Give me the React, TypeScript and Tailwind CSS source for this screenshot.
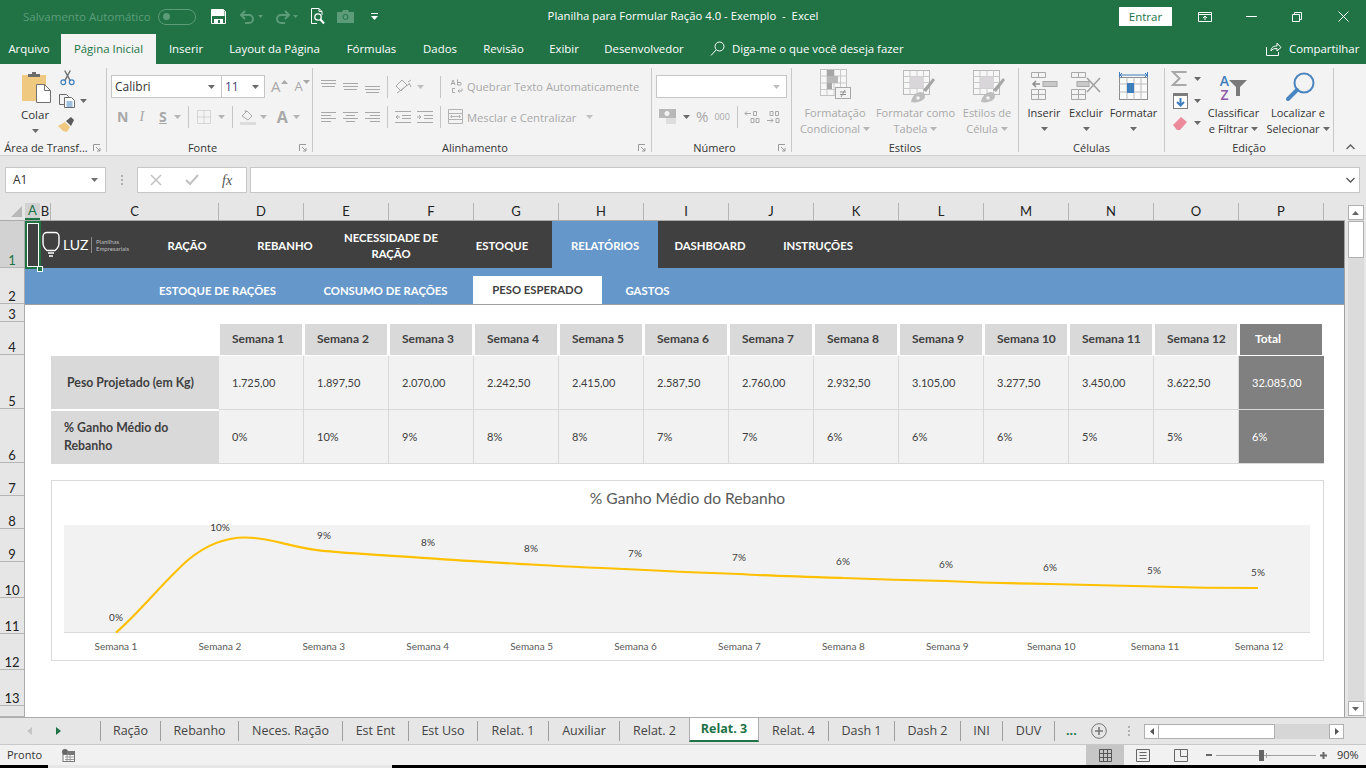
import type { ReactNode } from "react";

const UI = "font-['Open_Sans','Noto_Sans',sans-serif]";
const CELL = "font-['Lato','Liberation_Sans',sans-serif]";

const COLS = ["D", "E", "F", "G", "H", "I", "J", "K", "L", "M", "N", "O", "P"];
const WEEKS = Array.from({ length: 12 }, (_, i) => `Semana ${i + 1}`);
const PESO = ["1.725,00", "1.897,50", "2.070,00", "2.242,50", "2.415,00", "2.587,50", "2.760,00", "2.932,50", "3.105,00", "3.277,50", "3.450,00", "3.622,50"];
const GANHO = ["0%", "10%", "9%", "8%", "8%", "7%", "7%", "6%", "6%", "6%", "5%", "5%"];
const LABEL_POS: [number, number][] = [[116, 621], [220, 531], [324, 539], [428, 546], [531, 552], [635, 557], [739, 561], [843, 565], [946, 568], [1050, 571], [1154, 574], [1258, 576]];
const ROWS: [string, number][] = [["1", 47], ["2", 36], ["3", 18], ["4", 33], ["5", 54], ["6", 54], ["7", 33], ["8", 33], ["9", 33], ["10", 36], ["11", 36], ["12", 36], ["13", 36], ["", 11]];
const TOP_TABS: [string, number][] = [["Inserir", 60], ["Layout da Página", 117], ["Fórmulas", 77], ["Dados", 60], ["Revisão", 67], ["Exibir", 54], ["Desenvolvedor", 106]];
const SHEETS: [string, number][] = [["Ração", 60], ["Rebanho", 78], ["Neces. Ração", 104], ["Est Ent", 66], ["Est Uso", 69], ["Relat. 1", 71], ["Auxiliar", 71], ["Relat. 2", 70], ["Relat. 3", 70], ["Relat. 4", 70], ["Dash 1", 66], ["Dash 2", 66], ["INI", 42], ["DUV", 52]];

function Caret({ color = "#6a6a6a", className = "" }: { color?: string; className?: string }) {
  return (
    <svg width="7" height="4" viewBox="0 0 7 4" className={className}>
      <path d="M0 0h7L3.5 4z" fill={color} />
    </svg>
  );
}

function Sep({ className = "" }: { className?: string }) {
  return <div className={`w-px h-[22px] bg-[#c6c6c6] ${className}`} />;
}

function Launcher() {
  return (
    <svg width="8" height="8" viewBox="0 0 8 8" className="absolute right-[5px] top-[4px]">
      <path d="M.5 7V.5H7M3 3l4 4M7 4v3H4" fill="none" stroke="#9a9a9a" />
    </svg>
  );
}

function Group({ width, label, children, launcher }: { width: number; label: string; children: ReactNode; launcher?: boolean }) {
  return (
    <div style={{ width }} className="h-[84px] shrink-0 border-r border-[#c8c8c8]">
      <div className="h-[72px] flex">{children}</div>
      <div className={`relative h-[16px] flex items-center justify-center text-[11px] text-[#333] ${launcher ? "pr-[14px]" : ""}`}>
        {label}
        {launcher && <Launcher />}
      </div>
    </div>
  );
}

function BigButton({ width, icon, lines, disabled, caretLine }: { width: number; icon: ReactNode; lines: string[]; disabled?: boolean; caretLine?: boolean }) {
  return (
    <div style={{ width }} className={`shrink-0 flex flex-col items-center leading-[16px] text-[11px] ${disabled ? "text-[#a9a9a9]" : "text-[#333]"}`}>
      <div className="h-[37px] flex items-center justify-center">{icon}</div>
      {lines.map((l, i) => (
        <div key={l} className="h-[16px] whitespace-nowrap flex items-center gap-[3px]">
          {l}
          {caretLine && i === lines.length - 1 && <Caret color={disabled ? "#b5b5b5" : "#6a6a6a"} />}
        </div>
      ))}
      {!caretLine && (
        <div className="h-[16px] flex items-center">
          <Caret />
        </div>
      )}
    </div>
  );
}

function AlignIcon({ rows }: { rows: [number, number][] }) {
  return (
    <svg width="15" height="12" viewBox="0 0 15 12" className="shrink-0">
      {rows.map(([x, w], i) => (
        <rect key={i} x={x} y={i * 3 + 1} width={w} height="1" fill="#a8a8a8" />
      ))}
    </svg>
  );
}

function VAlign({ pad }: { pad: number }) {
  return (
    <svg width="15" height="16" viewBox="0 0 15 16" className="shrink-0">
      <rect y={pad} width="15" height="1" fill="#a8a8a8" />
      <rect y={pad + 3} width="15" height="1" fill="#a8a8a8" />
      <rect x="1" y={pad + 6} width="13" height="1" fill="#a8a8a8" />
    </svg>
  );
}

function TableIcon({ className = "" }: { className?: string }) {
  return (
    <svg width="32" height="33" viewBox="0 0 32 33" className={className}>
      <rect x=".5" y=".5" width="26" height="24" fill="#f7f7f7" stroke="#b9b9b9" />
      <path d="M.5 6.500h26M.5 12.500h26M.5 18.500h26M7 .5v24M14 .5v24M20.500 .5v24" stroke="#c9c9c9" fill="none" />
      <rect x="7" y="6.500" width="14" height="12" fill="#d9d6d9" />
      <path d="M30 8l2 2-9 12-3-2z" fill="#a6a6a6" />
      <path d="M8 32c1-6 5-10 10-10 4 1 5 4 3 7-3 3-9 4-13 3z" fill="#bdbdbd" />
      <circle cx="15" cy="28" r="1.800" fill="#f3f3f3" />
    </svg>
  );
}

function TitleBar() {
  return (
    <div className="h-[33px] shrink-0 flex items-center bg-[#217346] text-white">
      <span className="ml-[23px] w-[129px] text-[11.5px] whitespace-nowrap text-[#5c9c79]">Salvamento Automático</span>
      <div className="ml-[6px] w-[38px] h-[16px] rounded-full border border-[#5c9c79] flex items-center pl-[4px]">
        <div className="w-[7px] h-[7px] rounded-full bg-[#5c9c79]" />
      </div>
      <svg width="15" height="15" viewBox="0 0 15 15" className="ml-[15px]">
        <path d="M.5.5h12l2 2v12H.5z" fill="none" stroke="#fff" />
        <rect x="1" y="1" width="12.500" height="6" fill="#fff" />
        <rect x="3" y="10" width="9" height="5" fill="#fff" />
        <rect x="7" y="11" width="2" height="3" fill="#217346" />
      </svg>
      <svg width="24" height="14" viewBox="0 0 24 14" className="ml-[14px]" fill="none" stroke="#5c9c79" strokeWidth="2">
        <path d="M1 5h8a4 4 0 010 8H5M5 1L1 5l4 4" />
        <path d="M18 5h5l-2.500 3z" fill="#5c9c79" stroke="none" />
      </svg>
      <svg width="24" height="14" viewBox="0 0 24 14" className="ml-[11px]" fill="none" stroke="#5c9c79" strokeWidth="2">
        <path d="M14 5H6a4 4 0 000 8h4M10 1l4 4-4 4" />
        <path d="M18 5h5l-2.500 3z" fill="#5c9c79" stroke="none" />
      </svg>
      <svg width="15" height="17" viewBox="0 0 15 17" className="ml-[11px]" fill="none" stroke="#fff">
        <path d="M9 .5H1.500v15H7M9 .5l3 3V7M9 .5v3h3" />
        <circle cx="8" cy="9" r="3.200" strokeWidth="1.300" />
        <path d="M10.500 11.500l3.500 4" strokeWidth="2" />
      </svg>
      <svg width="17" height="13" viewBox="0 0 17 13" className="ml-[12px]">
        <path d="M0 2h5l1-2h5l1 2h5v11H0z" fill="#5c9c79" />
        <circle cx="8.500" cy="7" r="2.500" fill="none" stroke="#217346" />
      </svg>
      <svg width="7" height="7" viewBox="0 0 7 7" className="ml-[17px]">
        <rect width="7" height="1" fill="#fff" />
        <path d="M0 3h7L3.500 7z" fill="#fff" />
      </svg>
      <span className="ml-[169px] w-[272px] text-[11.3px] whitespace-pre text-center">Planilha para Formular Ração 4.0 - Exemplo  -  Excel</span>
      <div className="ml-[300px] w-[53px] h-[19px] bg-white text-[#217346] text-[11.5px] flex items-center justify-center">Entrar</div>
      <svg width="14" height="10" viewBox="0 0 14 10" className="ml-[26px]" fill="none" stroke="#fff">
        <path d="M.5.5h13v9H.5zM.5 2.500h13M7 8V4M5 6l2-2 2 2" />
      </svg>
      <div className="ml-[34px] w-[11px] h-px bg-white" />
      <svg width="10" height="10" viewBox="0 0 10 10" className="ml-[35px]" fill="none" stroke="#fff">
        <path d="M.5 2.500h7v7h-7zM2.500 2.500v-2h7v7h-2" />
      </svg>
      <svg width="11" height="11" viewBox="0 0 11 11" className="ml-[36px]" stroke="#fff">
        <path d="M.5.5l10 10M10.500.5l-10 10" />
      </svg>
    </div>
  );
}

function MenuTabs() {
  return (
    <div className="h-[31px] shrink-0 flex items-end bg-[#217346] text-white text-[11.4px]">
      <div className="w-[58px] mr-[3px] h-[30px] flex items-center justify-center">Arquivo</div>
      <div className="w-[95px] h-[30px] bg-[#f3f3f3] text-[#217346] flex items-center justify-center">Página Inicial</div>
      {TOP_TABS.map(([t, w]) => (
        <div key={t} style={{ width: w }} className="h-[30px] flex items-center justify-center whitespace-nowrap">{t}</div>
      ))}
      <svg width="15" height="15" viewBox="0 0 15 15" className="ml-[13px] mb-[8px]" fill="none" stroke="#fff">
        <circle cx="9.500" cy="5.500" r="4.500" />
        <path d="M6 9l-5 5.500" />
      </svg>
      <div className="ml-[7px] w-[171px] h-[30px] flex items-center whitespace-nowrap">Diga-me o que você deseja fazer</div>
      <svg width="16" height="14" viewBox="0 0 16 14" className="ml-[363px] mb-[8px]" fill="none" stroke="#fff">
        <path d="M.5 5v8.500h12V10M5 9c0-4 3-5 6-5V1l4 4.500L11 9V6.500C8 6.500 6 7 5 9z" />
      </svg>
      <div className="ml-[7px] h-[30px] flex items-center whitespace-nowrap">Compartilhar</div>
    </div>
  );
}

function Ribbon() {
  return (
    <div className={`h-[92px] shrink-0 bg-[#f3f3f3] border-b border-[#d2d2d2] pt-[4px] flex ${UI}`}>
      <Group width={107} label="Área de Transf..." launcher>
        <div className="w-[70px] flex flex-col items-center leading-[16px] text-[11.500px] text-[#333]">
          <svg width="29" height="31" viewBox="0 0 29 31" className="mt-[4px] mb-[2px] ml-[2px]">
            <rect y="3" width="24" height="26" fill="#efc97f" />
            <path d="M6 5V2h4V0h4v2h4v3z" fill="#6d6d6d" />
            <path d="M14.500 12.500h8l6 6v12h-14z" fill="#fff" stroke="#707070" />
            <path d="M22.500 12.500v6h6" fill="none" stroke="#707070" />
          </svg>
          <div className="h-[16px] mt-[2px]">Colar</div>
          <div className="h-[16px] flex items-center"><Caret /></div>
        </div>
        <div className="flex flex-col">
          <svg width="15" height="16" viewBox="0 0 16 16" className="mt-[2px] ml-[-10px]" fill="none">
            <path d="M5 0l6 11M11 0L5 11" stroke="#6f6f6f" strokeWidth="1.500" />
            <circle cx="3.500" cy="12.500" r="2.500" stroke="#3f7ebd" strokeWidth="1.300" />
            <circle cx="12.500" cy="12.500" r="2.500" stroke="#3f7ebd" strokeWidth="1.300" />
          </svg>
          <div className="mt-[8px] ml-[-11px] flex items-center gap-[5px]">
            <svg width="16" height="14" viewBox="0 0 16 14" fill="none" stroke="#6a6a6a">
              <path d="M.5.5h7l2 2v8h-9z" fill="#f3f3f3" />
              <path d="M5.500 3.500h7l3 3v7h-10z" fill="#fff" />
              <path d="M7.500 8h6M7.500 10h6M7.500 12h6" stroke="#3f7ebd" />
            </svg>
            <Caret />
          </div>
          <svg width="16" height="15" viewBox="0 0 16 15" className="mt-[9px] ml-[-12px]">
            <path d="M0 9l7-4 5 5-3 5-4-1z" fill="#efc97f" />
            <path d="M8 4l5-4 3 3-3 6z" fill="#5a5a5a" />
          </svg>
        </div>
      </Group>
      <Group width={206} label="Fonte" launcher>
        <div className="pl-[4px] pt-[7px] flex flex-col gap-[7px]">
          <div className="flex items-center h-[23px]">
            <div className="w-[111px] h-[23px] bg-white border border-[#c6c6c6] flex items-center justify-between px-[3px] pr-[6px] text-[#333] text-[12px]">
              Calibri
              <Caret />
            </div>
            <div className="w-[43px] h-[23px] bg-white border border-[#c6c6c6] border-l-0 flex items-center justify-between pl-[3px] pr-[5px] text-[#4a3c78] text-[12px]">
              11
              <Caret />
            </div>
            <span className="ml-[6px] text-[15px] text-[#a8a8a8] leading-none">A</span>
            <Caret color="#a8a8a8" className="rotate-180 mb-[10px]" />
            <span className="ml-[7px] text-[13px] text-[#a8a8a8] leading-none">A</span>
            <Caret color="#a8a8a8" className="mb-[10px]" />
          </div>
          <div className="flex items-center h-[23px] text-[#a8a8a8] text-[14px] leading-none">
            <span className="ml-[6px] font-bold">N</span>
            <span className="ml-[11px] italic font-['Liberation_Serif',serif]">I</span>
            <span className="ml-[15px] font-bold underline">S</span>
            <Caret color="#b5b5b5" className="ml-[7px]" />
            <Sep className="ml-[7px]" />
            <svg width="14" height="14" viewBox="0 0 14 14" className="ml-[8px]" fill="none" stroke="#b8b8b8" strokeDasharray="1 1">
              <path d="M.5.5h13v13H.5zM7 .5v13M.5 7h13" />
            </svg>
            <Caret color="#b5b5b5" className="ml-[7px]" />
            <Sep className="ml-[7px]" />
            <svg width="16" height="16" viewBox="0 0 16 16" className="ml-[7px]">
              <path d="M2 7l5-5 5 5-4 4z" fill="none" stroke="#a8a8a8" />
              <path d="M5 3l1-2" stroke="#a8a8a8" />
              <rect y="13" width="16" height="3" fill="#dcdcdc" />
            </svg>
            <Caret color="#b5b5b5" className="ml-[4px]" />
            <span className="ml-[10px] text-[16px] font-bold">A</span>
            <Caret color="#b5b5b5" className="ml-[5px]" />
          </div>
        </div>
      </Group>
      <Group width={339} label="Alinhamento" launcher>
        <div className="pl-[8px] pt-[7px] flex flex-col gap-[7px] text-[#a9a9a9] text-[11.2px] whitespace-nowrap">
          <div className="flex items-center h-[23px] gap-[7px]">
            <VAlign pad={1} />
            <VAlign pad={4} />
            <VAlign pad={7} />
            <Sep />
            <svg width="17" height="15" viewBox="0 0 17 15" fill="none" stroke="#a8a8a8">
              <path d="M1 7l6-6 5 5-6 6zM13 3l3-2M14 4l2 4M2 14l12-9" />
            </svg>
            <Caret color="#c0c0c0" className="ml-[-2px]" />
            <Sep className="ml-[9px]" />
            <svg width="13" height="15" viewBox="0 0 13 15" fill="none" stroke="#a8a8a8" className="ml-[2px] shrink-0">
              <path d="M1 6l2-5 2 5M1.700 4.500h2.600M7.500.5V6M7.500 3.500h2.500a1.200 1.200 0 010 2.500H7.500M5 9.500H2.500v4H5M12 9.500v2.500H8M9.500 10.500L8 12l1.500 1.500" />
            </svg>
            <span className="ml-[-3px] mt-[2px]">Quebrar Texto Automaticamente</span>
          </div>
          <div className="flex items-center h-[23px] gap-[7px]">
            <AlignIcon rows={[[0, 15], [0, 10], [0, 15], [0, 10]]} />
            <AlignIcon rows={[[0, 15], [3, 9], [0, 15], [3, 9]]} />
            <AlignIcon rows={[[0, 15], [5, 10], [0, 15], [5, 10]]} />
            <Sep />
            <svg width="16" height="12" viewBox="0 0 16 12" stroke="#a8a8a8" fill="none">
              <path d="M0 .5h16M7 4.500h9M7 7.500h9M0 11.500h16M5 6H1M3 4L1 6l2 2" />
            </svg>
            <svg width="16" height="12" viewBox="0 0 16 12" stroke="#a8a8a8" fill="none" className="ml-[-1px]">
              <path d="M0 .5h16M7 4.500h9M7 7.500h9M0 11.500h16M0 6h4M2 4l2 2-2 2" />
            </svg>
            <Sep />
            <svg width="15" height="15" viewBox="0 0 15 15" stroke="#b3b3b3" fill="none">
              <path d="M.5.500h14v14H.5zM.5 4.500h14M.5 10.500h14M3 7.500h9M4 6L2.500 7.500 4 9M11 6l1.500 1.500L11 9" />
            </svg>
            <span className="ml-[-3px] mt-[4px]">Mesclar e Centralizar</span>
            <Caret color="#c0c0c0" className="ml-[3px]" />
          </div>
        </div>
      </Group>
      <Group width={140} label="Número" launcher>
        <div className="pl-[4px] pt-[7px] flex flex-col gap-[7px]">
          <div className="w-[131px] h-[23px] bg-white border border-[#c6c6c6] flex items-center justify-end pr-[6px]">
            <Caret color="#c0c0c0" />
          </div>
          <div className="flex items-center h-[23px] text-[#a8a8a8] leading-none">
            <svg width="18" height="16" viewBox="0 0 18 16" className="ml-[3px]">
              <rect width="17" height="9" fill="#b8b8b8" />
              <circle cx="8" cy="4.500" r="2.500" fill="#f3f3f3" />
              <path d="M7 10h10M7 12h10M7 14h10" stroke="#c8c8c8" />
            </svg>
            <Caret className="ml-[6px]" />
            <span className="ml-[6px] text-[15px]">%</span>
            <span className="ml-[6px] text-[9px]">000</span>
            <Sep className="ml-[7px]" />
            <svg width="16" height="14" viewBox="0 0 16 14" fill="none" stroke="#a8a8a8" className="ml-[6px]">
              <path d="M7 3.500H1M3 1.500l-2 2 2 2M9.500 1.500h3v4h-3zM7 8.500h3v4H7zM12 8.500h3v4h-3z" />
            </svg>
            <svg width="16" height="14" viewBox="0 0 16 14" fill="none" stroke="#a8a8a8" className="ml-[6px]">
              <path d="M4 1.500h3v4H4zM9.500 1.500h3v4h-3zM1 10.500h6M5 8.500l2 2-2 2M10 8.500h3v4h-3z" />
            </svg>
          </div>
        </div>
      </Group>
      <Group width={227} label="Estilos">
        <div className="w-[6px]" />
        <BigButton
          width={74}
          disabled
          caretLine
          lines={["Formatação", "Condicional"]}
          icon={
            <svg width="31" height="36" viewBox="0 0 31 36">
              <rect x=".5" y=".5" width="26" height="26" fill="#f7f7f7" stroke="#c2c2c2" />
              <path d="M.5 7h26M.5 14h26M.5 20.500h26M7 .5v26M14 .5v26M20.500 .5v26" stroke="#c9c9c9" />
              <rect x="7" y="1" width="7" height="6" fill="#a6a6a6" />
              <rect x="7" y="7" width="11" height="7" fill="#b8b8b8" />
              <rect x="7" y="14" width="5" height="6" fill="#a6a6a6" />
              <rect x="15.500" y="18.500" width="15" height="11" fill="#f3f3f3" stroke="#a8a8a8" />
              <path d="M20 23h6M20 25.500h6M25 21l-4 7" stroke="#8f8f8f" fill="none" />
            </svg>
          }
        />
        <BigButton width={87} disabled caretLine lines={["Formatar como", "Tabela"]} icon={<TableIcon className="ml-[7px]" />} />
        <BigButton width={56} disabled caretLine lines={["Estilos de", "Célula"]} icon={<TableIcon className="ml-[4px]" />} />
      </Group>
      <Group width={146} label="Células">
        <div className="w-[1px]" />
        <BigButton
          width={50}
          lines={["Inserir"]}
          icon={
            <svg width="27" height="29" viewBox="0 0 27 29" fill="#f3f3f3" stroke="#a8a8a8">
              <path d="M.5.5h14v5H.5zM7.500.5v5M.5 17.500h14v10H.5zM.5 22.500h14M7.500 17.500v10" />
              <rect x="12" y="9.500" width="14" height="5" fill="#c9c9c9" />
              <path d="M9 12H2M5 9l-3 3 3 3" fill="none" stroke="#8a8a8a" strokeWidth="1.500" />
            </svg>
          }
        />
        <BigButton
          width={34}
          lines={["Excluir"]}
          icon={
            <svg width="31" height="29" viewBox="0 0 31 29" fill="#f3f3f3" stroke="#a8a8a8" className="ml-[1px]">
              <path d="M.5.5h14v5H.5zM7.500.5v5M.5 17.500h14v10H.5zM.5 22.500h14M7.500 17.500v10" />
              <rect x="6" y="9.500" width="12" height="5" fill="#c9c9c9" />
              <path d="M16 6l13 14M29 6L16 20" stroke="#a0a0a0" strokeWidth="1.600" />
            </svg>
          }
        />
        <BigButton
          width={61}
          lines={["Formatar"]}
          icon={
            <svg width="29" height="32" viewBox="0 0 29 32" fill="none">
              <path d="M1 4h27M3 2L1 4l2 2M26 2l2 2-2 2M.5 1v6M28.500 1v6" stroke="#3f7ebd" />
              <rect x=".5" y="6.500" width="28" height="22" fill="#fafafa" stroke="#8d8d8d" />
              <path d="M.5 13h28M.5 21h28M8 6.500v22M15 6.500v22M22 6.500v22" stroke="#bdbdbd" />
              <rect x="8" y="12" width="7" height="10" fill="#3f7ebd" />
            </svg>
          }
        />
      </Group>
      <Group width={169} label="Edição">
        <div className="w-[34px] shrink-0 pl-[6px] flex flex-col">
          <div className="flex items-center gap-[7px] mt-[2px] h-[17px] w-[40px]">
            <svg width="16" height="15" viewBox="0 0 16 15" fill="none" stroke="#a8a8a8" strokeWidth="2">
              <path d="M15.500 1H2l6.500 6.500L2 14h13.500" />
            </svg>
            <Caret />
          </div>
          <div className="flex items-center gap-[6px] mt-[6px] h-[16px] ml-[2px] w-[40px]">
            <svg width="15" height="16" viewBox="0 0 15 16">
              <rect x=".5" y=".5" width="14" height="15" fill="#fff" stroke="#7c7c7c" />
              <rect x="0" y="0" width="15" height="3" fill="#7c7c7c" />
              <path d="M7.500 5v7M4 9l3.500 3.500L11 9" fill="none" stroke="#3f7ebd" strokeWidth="2" />
            </svg>
            <Caret />
          </div>
          <div className="flex items-center gap-[6px] mt-[7px] h-[14px] ml-[2px] w-[40px]">
            <svg width="15" height="13" viewBox="0 0 15 13">
              <path d="M0 8l8-8 6 5-7 8H4z" fill="#ec8a9b" />
            </svg>
            <Caret />
          </div>
        </div>
        <BigButton
          width={69}
          caretLine
          lines={["Classificar", "e Filtrar"]}
          icon={
            <div className="flex items-end h-[31px] relative">
              <div className="flex flex-col items-center text-[14px] leading-[14px] font-semibold">
                <span className="text-[#3f7ebd]">A</span>
                <span className="text-[#8e5aa8]">Z</span>
              </div>
              <svg width="18" height="16" viewBox="0 0 18 16" className="mb-[6px]">
                <path d="M0 0h18l-7 7v9H7V7z" fill="#7a7a7a" />
              </svg>
            </div>
          }
        />
        <BigButton
          width={60}
          caretLine
          lines={["Localizar e", "Selecionar"]}
          icon={
            <svg width="29" height="29" viewBox="0 0 29 29" fill="none" stroke="#4a85c0" className="ml-[4px]">
              <circle cx="18" cy="11" r="9.500" strokeWidth="2" />
              <path d="M11 18L2 27" strokeWidth="4" strokeLinecap="round" />
            </svg>
          }
        />
      </Group>
      <div className="flex-1 flex items-end justify-center">
        <svg width="9" height="6" viewBox="0 0 9 6" className="mb-[5px]" fill="none" stroke="#666" strokeWidth="1.500">
          <path d="M.5 5l4-4 4 4" />
        </svg>
      </div>
    </div>
  );
}

function FormulaBar() {
  return (
    <div className={`h-[47px] shrink-0 bg-[#e6e6e6] flex pt-[11px] pl-[5px] ${UI}`}>
      <div className="w-[101px] h-[26px] bg-white border border-[#c6c6c6] flex items-center justify-between px-[7px] text-[12px] text-[#333]">
        A1
        <Caret color="#707070" />
      </div>
      <div className="w-[31px] h-[26px] flex flex-col items-center justify-center gap-[2px]">
        <div className="w-[2px] h-[2px] bg-[#b0b0b0]" />
        <div className="w-[2px] h-[2px] bg-[#b0b0b0]" />
        <div className="w-[2px] h-[2px] bg-[#b0b0b0]" />
      </div>
      <div className="w-[110px] h-[26px] bg-white border border-[#c6c6c6] flex items-center">
        <svg width="12" height="12" viewBox="0 0 12 12" className="ml-[12px]" stroke="#c2c2c2" strokeWidth="1.500">
          <path d="M1 1l10 10M11 1L1 11" />
        </svg>
        <svg width="14" height="12" viewBox="0 0 14 12" className="ml-[23px]" fill="none" stroke="#c2c2c2" strokeWidth="2">
          <path d="M1 6l4 4 8-9" />
        </svg>
        <span className="ml-[23px] text-[14px] italic font-['Liberation_Serif',serif] text-[#555]">fx</span>
      </div>
      <div className="ml-[3px] w-[1110px] h-[26px] bg-white border border-[#c6c6c6] flex items-center justify-end pr-[4px]">
        <svg width="9" height="6" viewBox="0 0 9 6" fill="none" stroke="#555" strokeWidth="1.300">
          <path d="M.5 1l4 4 4-4" />
        </svg>
      </div>
    </div>
  );
}

function LogoBulb() {
  return (
    <svg width="18" height="27" viewBox="0 0 18 27" fill="none" stroke="#fff" className="shrink-0">
      <path d="M5 1.500h8c2.500 0 4 2 4 4V12c0 4-2 6-4 7.500H5C3 18 1 16 1 12V5.500c0-2 1.500-4 4-4z" strokeWidth="1.400" />
      <path d="M6 22h6M7 25h4" strokeWidth="1.400" />
    </svg>
  );
}

function ColumnHeader() {
  return (
    <div className={`h-[18px] shrink-0 flex bg-[#e6e6e6] border-b border-[#ababab] text-[13px] text-[#222] ${CELL}`}>
      <div className="w-[25px] flex items-end justify-end pr-[3px] pb-[3px]">
        <svg width="11" height="11" viewBox="0 0 11 11">
          <path d="M11 0v11H0z" fill="#b8b8b8" />
        </svg>
      </div>
      <div className="w-[15px] bg-[#d2d2d2] text-[#217346] flex items-center justify-center border-b-2 border-[#217346]">A</div>
      <div className="w-[11px] flex items-center justify-center border-r border-[#b5b5b5]">B</div>
      <div className="w-[168px] flex items-center justify-center border-r border-[#b5b5b5]">C</div>
      {COLS.map((c) => (
        <div key={c} className="w-[85px] flex items-center justify-center border-r border-[#b5b5b5]">{c}</div>
      ))}
      <div className="flex-1" />
    </div>
  );
}

function RowHeader() {
  return (
    <div className={`w-[25px] shrink-0 bg-[#e6e6e6] border-r border-[#ababab] ${CELL}`}>
      {ROWS.map(([r, h]) => (
        <div
          key={r || "end"}
          style={{ height: h }}
          className={`flex items-end justify-center text-[13px] leading-[13px] border-b border-[#b5b5b5] ${r === "1" ? "bg-[#d2d2d2] text-[#217346]" : "text-[#222]"}`}
        >
          {r}
        </div>
      ))}
    </div>
  );
}

function NavRows() {
  return (
    <>
      <div className="h-[47px] flex items-center bg-[#404040] text-white font-bold text-[11.3px] relative">
        <div className="absolute left-0 top-0 w-[16px] h-[48px] border-2 border-[#217346] outline outline-1 -outline-offset-3 outline-white z-10" />
        <div className="absolute left-[12px] top-[45px] w-[6px] h-[6px] bg-[#217346] border border-white z-20" />
        <div className="ml-[17px] flex items-center">
          <LogoBulb />
          <span className="ml-[3px] w-[24px] text-[14px] font-normal leading-none">LUZ</span>
          <div className="ml-[4px] w-px h-[16px] bg-[#8a8a8a]" />
          <span className="ml-[4px] w-[34px] text-[6px] leading-[7px] font-normal text-[#bdbdbd]">Planilhas<br />Empresariais</span>
        </div>
        <div className="ml-[29px] w-[56px] text-center pt-[3px]">RAÇÃO</div>
        <div className="ml-[40px] w-[60px] text-center pt-[3px]">REBANHO</div>
        <div className="ml-[21px] w-[110px] text-center leading-[16px] pt-[3px]">NECESSIDADE DE RAÇÃO</div>
        <div className="ml-[26px] w-[60px] text-center pt-[3px]">ESTOQUE</div>
        <div className="ml-[20px] w-[106px] h-full bg-[#6597cb] flex items-center justify-center pt-[3px]">RELATÓRIOS</div>
        <div className="ml-[16px] w-[72px] text-center pt-[3px]">DASHBOARD</div>
        <div className="ml-[36px] w-[72px] text-center pt-[3px]">INSTRUÇÕES</div>
      </div>
      <div className="h-[37px] flex bg-[#6597cb] border-b border-[#a0a0a0] text-white font-bold text-[11.3px]">
        <div className="ml-[134px] w-[117px] flex items-center justify-center whitespace-nowrap pt-[10px]">ESTOQUE DE RAÇÕES</div>
        <div className="ml-[47px] w-[125px] flex items-center justify-center whitespace-nowrap pt-[10px]">CONSUMO DE RAÇÕES</div>
        <div className="ml-[25px] w-[129px] mt-[8px] bg-white text-[#404040] flex items-center justify-center whitespace-nowrap">PESO ESPERADO</div>
        <div className="ml-[23px] w-[45px] flex items-center justify-center pt-[11px]">GASTOS</div>
      </div>
    </>
  );
}

function DataRow({ label, values, total, multi }: { label: string; values: string[]; total: string; multi?: boolean }) {
  return (
    <div className="h-[54px] flex text-[11px] text-[#404040]">
      <div className="w-[26px]" />
      <div className={`w-[168px] bg-[#d9d9d9] flex items-center font-bold text-[12.3px] ${multi ? "pl-[13px] mt-[1px] leading-[18px] pb-[2px]" : "pl-[16px] mb-[1px] pt-[2px]"}`}>
        <span className={multi ? "w-[120px]" : ""}>{label}</span>
      </div>
      {values.map((v, i) => (
        <div key={i} className="w-[85px] bg-[#f2f2f2] border-r border-b border-[#d9d9d9] flex items-center pl-[13px] pt-[2px]">{v}</div>
      ))}
      <div className="w-[85px] bg-[#808080] border-b border-[#d9d9d9] text-white flex items-center pl-[13px] pt-[1px]">{total}</div>
    </div>
  );
}

function PesoTable() {
  return (
    <>
      <div className="h-[33px] flex pt-[2px] text-[12px] font-bold text-[#404040]">
        <div className="w-[194px]" />
        {WEEKS.map((w) => (
          <div key={w} className="w-[82px] ml-px mr-[2px] bg-[#d9d9d9] flex items-center pl-[12px] pb-[2px]">
            {w}
          </div>
        ))}
        <div className="w-[82px] ml-px bg-[#808080] text-white flex items-center pl-[15px] pb-[2px]">Total</div>
      </div>
      <div className="h-px" />
      <DataRow label="Peso Projetado (em Kg)" values={PESO} total="32.085,00" />
      <DataRow label="% Ganho Médio do Rebanho" values={GANHO} total="6%" multi />
    </>
  );
}

function Chart() {
  return (
    <div className="ml-[26px] mt-[16px] w-[1273px] h-[181px] border border-[#d9d9d9] bg-white text-[#595959]">
      <div className="h-[36px] flex items-center justify-center text-[15.6px] text-[#595959]">% Ganho Médio do Rebanho</div>
      <div className="mx-[12px] mt-[8px] w-[1246px] h-[108px] bg-[#f2f2f2] border-b border-[#d9d9d9]">
        <svg width="1246" height="107" viewBox="64 525 1246 107" className="block overflow-visible">
          <path
            d="M116 632.500C138 614 165 580 188 560C206 545 224 537.500 245 537.500C272 537.500 292 548 323 550.800C360 554 395 556 427 558.200C465 561 500 562.800 531 564.500C565 566.500 600 568 635 569.500C670 571.500 705 573 739 574C772 576 808 577 843 578C877 579.500 912 580.500 946 581C980 582.500 1015 583.500 1050 584C1085 585 1120 586 1154 586.500C1188 587.500 1222 588 1258 588"
            fill="none"
            stroke="#ffc000"
            strokeWidth="2.200"
          />
          {GANHO.map((g, i) => (
            <text key={i} x={LABEL_POS[i][0]} y={LABEL_POS[i][1]} textAnchor="middle" fontSize="10" fill="#404040">
              {g}
            </text>
          ))}
        </svg>
      </div>
      <div className="mx-[12px] mt-[5px] grid grid-cols-12 text-[10px] leading-[16px] text-[#595959]">
        {WEEKS.map((w) => (
          <div key={w} className="text-center">{w}</div>
        ))}
      </div>
    </div>
  );
}

function ScrollBar() {
  return (
    <div className="w-[21px] shrink-0 bg-[#e6e6e6] flex flex-col items-center pt-[2px]">
      <div className="w-[16px] h-[511px] bg-[#dbdbdb] flex flex-col">
        <div className="h-[15px] bg-white border border-[#b0b0b0] flex items-center justify-center">
          <Caret color="#666" className="rotate-180" />
        </div>
        <div className="mt-[1px] h-[37px] bg-white border border-[#b0b0b0]" />
        <div className="flex-1" />
        <div className="h-[15px] bg-white border border-[#b0b0b0] flex items-center justify-center">
          <Caret color="#666" />
        </div>
      </div>
    </div>
  );
}

function SheetTabs() {
  return (
    <div className={`h-[28px] shrink-0 bg-[#e6e6e6] border-y border-[#ababab] border-b-[#c8c8c8] flex text-[12.5px] text-[#444] ${UI}`}>
      <div className="w-[100px] flex items-center">
        <svg width="5" height="8" viewBox="0 0 5 8" className="ml-[27px]"><path d="M5 0v8L0 4z" fill="#c4c4c4" /></svg>
        <svg width="5" height="8" viewBox="0 0 5 8" className="ml-[24px]"><path d="M0 0v8l5-4z" fill="#217346" /></svg>
      </div>
      <div className="w-px h-[20px] mt-[3px] bg-[#9e9e9e]" />
      {SHEETS.map(([s, w]) =>
        s === "Relat. 3" ? (
          <div key={s} style={{ width: w }} className="h-[24px] -ml-px bg-white border-x border-[#ababab] border-b-2 border-b-[#217346] text-[#217346] font-bold flex items-center justify-center whitespace-nowrap">
            {s}
          </div>
        ) : (
          <div key={s} style={{ width: w }} className="h-[20px] mt-[3px] border-r border-[#9e9e9e] flex items-center justify-center whitespace-nowrap">
            {s}
          </div>
        ),
      )}
      <span className="ml-[11px] mt-[3px] w-[12px] text-[#217346] font-bold leading-[20px]">...</span>
      <svg width="16" height="16" viewBox="0 0 16 16" className="ml-[13px] mt-[5px]" fill="none" stroke="#777">
        <circle cx="8" cy="8" r="7.300" />
        <path d="M8 4v8M4 8h8" strokeWidth="1.600" />
      </svg>
      <div className="ml-[21px] mt-[8px] flex flex-col gap-[2px]">
        <div className="w-[2px] h-[2px] bg-[#b0b0b0]" />
        <div className="w-[2px] h-[2px] bg-[#b0b0b0]" />
        <div className="w-[2px] h-[2px] bg-[#b0b0b0]" />
      </div>
      <div className="ml-[14px] mt-[6px] w-[200px] h-[15px] bg-[#d6d6d6] flex">
        <div className="w-[15px] bg-white border border-[#b0b0b0] flex items-center justify-center">
          <svg width="4" height="7" viewBox="0 0 4 7"><path d="M4 0v7L0 3.500z" fill="#555" /></svg>
        </div>
        <div className="w-[116px] bg-white border border-[#b0b0b0] border-l-0" />
        <div className="flex-1" />
        <div className="w-[15px] bg-white border border-[#b0b0b0] flex items-center justify-center">
          <svg width="4" height="7" viewBox="0 0 4 7"><path d="M0 0v7l4-3.500z" fill="#555" /></svg>
        </div>
      </div>
    </div>
  );
}

function StatusBar() {
  return (
    <div className={`h-[20px] shrink-0 bg-[#f1f1f1] flex items-center text-[11px] text-[#333] ${UI}`}>
      <span className="ml-[7px] w-[35px]">Pronto</span>
      <svg width="13" height="13" viewBox="0 0 13 13" className="ml-[20px]">
        <circle cx="3" cy="3" r="3" fill="#666" />
        <rect x="1" y="5.500" width="11.500" height="7" fill="#fff" stroke="#777" />
        <path d="M6 2h7v3H6z" fill="#777" />
        <path d="M3 8h9M3 10.500h9M5 6v6M8 6v6" stroke="#999" />
      </svg>
      <div className="ml-[1011px] w-[38px] h-[20px] bg-[#c6c6c6] flex items-center justify-center">
        <svg width="13" height="13" viewBox="0 0 13 13" fill="none" stroke="#555">
          <path d="M.5.500h12v12H.5zM4.500.500v12M8.500.500v12M.5 4.500h12M.5 8.500h12" />
        </svg>
      </div>
      <svg width="14" height="13" viewBox="0 0 14 13" className="ml-[12px]" fill="none" stroke="#666">
        <path d="M.5.500h13v12H.5zM3.500 3.500h7M3.500 6.500h7M3.500 9.500h7" />
      </svg>
      <svg width="14" height="13" viewBox="0 0 14 13" className="ml-[24px]" fill="none" stroke="#666">
        <path d="M.5.500h13v12H.5zM6.500.500v7h7" />
      </svg>
      <div className="ml-[18px] w-[6px] h-[2px] bg-[#666]" />
      <div className="ml-[4px] w-[100px] h-px bg-[#a0a0a0] relative">
        <div className="absolute left-[43px] top-[-5px] w-[5px] h-[11px] bg-[#666]" />
        <div className="absolute left-[50px] top-[-2px] w-px h-[5px] bg-[#a0a0a0]" />
      </div>
      <svg width="7" height="7" viewBox="0 0 7 7" className="ml-[4px]"><path d="M0 3.500h7M3.500 0v7" stroke="#666" strokeWidth="2" /></svg>
      <span className="ml-[10px]">90%</span>
    </div>
  );
}

export default function App() {
  return (
    <div className={`w-[1366px] h-[768px] overflow-hidden flex flex-col bg-white ${UI}`}>
      <TitleBar />
      <MenuTabs />
      <Ribbon />
      <FormulaBar />
      <div className="h-[514px] shrink-0 flex">
        <div className="w-[1345px] shrink-0 flex flex-col">
          <ColumnHeader />
          <div className="flex flex-1">
            <RowHeader />
            <div className={`flex-1 border-r border-[#a0a0a0] ${CELL}`}>
              <NavRows />
              <div className="h-[17px]" />
              <PesoTable />
              <Chart />
            </div>
          </div>
        </div>
        <ScrollBar />
      </div>
      <SheetTabs />
      <StatusBar />
      <div className="h-[3px] shrink-0 flex bg-black">
        <div className="ml-[48px] w-[344px] bg-[#e6e6e6]" />
      </div>
    </div>
  );
}
